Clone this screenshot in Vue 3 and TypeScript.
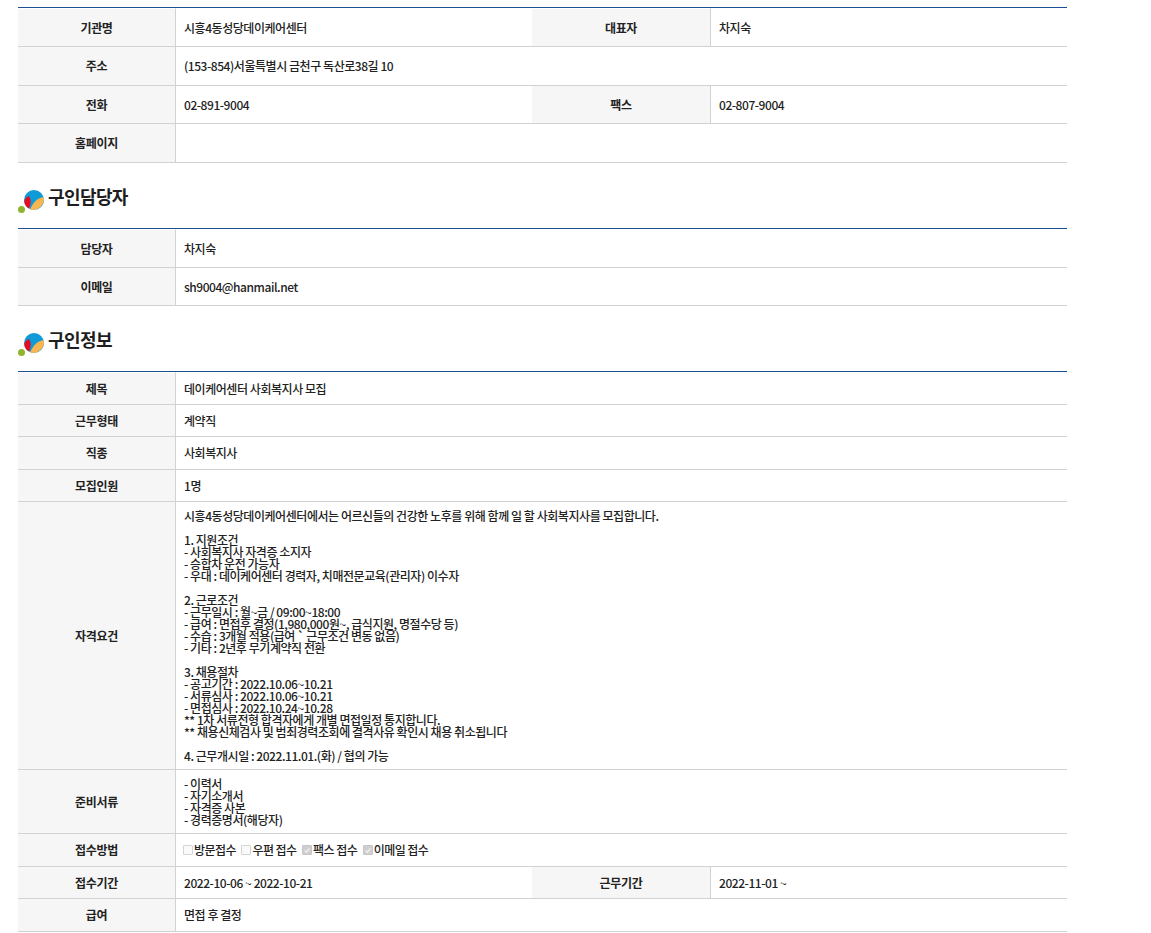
<script setup lang="ts">
interface Cell { th: string; td: string; th2?: string; td2?: string; h: number }
const t1: Cell[] = [
  { th: '기관명', td: '시흥4동성당데이케어센터', th2: '대표자', td2: '차지숙', h: 39 },
  { th: '주소', td: '(153-854)서울특별시 금천구 독산로38길 10', h: 39 },
  { th: '전화', td: '02-891-9004', th2: '팩스', td2: '02-807-9004', h: 38 },
  { th: '홈페이지', td: '', h: 39 },
]
const t2: Cell[] = [
  { th: '담당자', td: '차지숙', h: 39 },
  { th: '이메일', td: 'sh9004@hanmail.net', h: 38 },
]
const desc = `시흥4동성당데이케어센터에서는 어르신들의 건강한 노후를 위해 함께 일 할 사회복지사를 모집합니다.

1. 지원조건
- 사회복지사 자격증 소지자
- 승합차 운전 가능자
- 우대 : 데이케어센터 경력자, 치매전문교육(관리자) 이수자

2. 근로조건
- 근무일시 : 월~금 / 09:00~18:00
- 급여 : 면접후 결정(1,980,000원~, 급식지원, 명절수당 등)
- 수습 : 3개월 적용(급여 \` 근무조건 변동 없음)
- 기타 : 2년후 무기계약직 전환

3. 채용절차
- 공고기간 : 2022.10.06~10.21
- 서류심사 : 2022.10.06~10.21
- 면접심사 : 2022.10.24~10.28
** 1차 서류전형 합격자에게 개별 면접일정 통지합니다.
** 채용신체검사 및 범죄경력조회에 결격사유 확인시 채용 취소됩니다

4. 근무개시일 : 2022.11.01.(화) / 협의 가능`
const docs = `- 이력서
- 자기소개서
- 자격증 사본
- 경력증명서(해당자)`
const methods = [
  { label: '방문접수', on: false },
  { label: '우편 접수', on: false },
  { label: '팩스 접수', on: true },
  { label: '이메일 접수', on: true },
]
</script>

<template>
  <div class="page">
    <table class="tbl">
      <colgroup><col class="c1" /><col class="c2" /><col class="c3" /><col /></colgroup>
      <tbody>
        <tr v-for="r in t1" :key="r.th" :style="{ height: r.h + 'px' }">
          <th>{{ r.th }}</th>
          <td :colspan="r.th2 ? 1 : 3">{{ r.td }}</td>
          <template v-if="r.th2"><th>{{ r.th2 }}</th><td>{{ r.td2 }}</td></template>
        </tr>
      </tbody>
    </table>

    <h2 class="head">
      <svg class="logo" width="28" height="26" viewBox="0 0 28 26">
        <circle cx="3.5" cy="22.5" r="3.5" fill="#8db52e" />
        <circle cx="16" cy="13" r="10" fill="#0f9ad8" />
        <path d="M12 22.5C15 15.5 20 10.5 25.9 10C27 17.5 21 23 15 23C14 23 13 22.8 12 22.5Z" fill="#f9b64f" />
        <path d="M6.3 14C7 11.5 9 10 10.5 9C12.5 11 13 13.5 12.5 16.5C12 18.5 11.5 20 11 21.5C8 20 6.5 17.5 6.3 14Z" fill="#e60d20" />
      </svg>
      구인담당자
    </h2>

    <table class="tbl">
      <colgroup><col class="c1" /><col /></colgroup>
      <tbody>
        <tr v-for="r in t2" :key="r.th" :style="{ height: r.h + 'px' }">
          <th>{{ r.th }}</th>
          <td>{{ r.td }}</td>
        </tr>
      </tbody>
    </table>

    <h2 class="head">
      <svg class="logo" width="28" height="26" viewBox="0 0 28 26">
        <circle cx="3.5" cy="22.5" r="3.5" fill="#8db52e" />
        <circle cx="16" cy="13" r="10" fill="#0f9ad8" />
        <path d="M12 22.5C15 15.5 20 10.5 25.9 10C27 17.5 21 23 15 23C14 23 13 22.8 12 22.5Z" fill="#f9b64f" />
        <path d="M6.3 14C7 11.5 9 10 10.5 9C12.5 11 13 13.5 12.5 16.5C12 18.5 11.5 20 11 21.5C8 20 6.5 17.5 6.3 14Z" fill="#e60d20" />
      </svg>
      구인정보
    </h2>

    <table class="tbl">
      <colgroup><col class="c1" /><col class="c2" /><col class="c3" /><col /></colgroup>
      <tbody>
        <tr class="r33"><th>제목</th><td colspan="3">데이케어센터 사회복지사 모집</td></tr>
        <tr class="r32"><th>근무형태</th><td colspan="3">계약직</td></tr>
        <tr class="r33"><th>직종</th><td colspan="3">사회복지사</td></tr>
        <tr class="r32"><th>모집인원</th><td colspan="3">1명</td></tr>
        <tr class="r268"><th>자격요건</th><td colspan="3" class="pre">{{ desc }}</td></tr>
        <tr class="r64"><th>준비서류</th><td colspan="3" class="pre">{{ docs }}</td></tr>
        <tr class="r33">
          <th>접수방법</th>
          <td colspan="3">
            <span class="methods">
              <span v-for="m in methods" :key="m.label" class="method">
                <span class="box" :class="{ on: m.on }">
                  <svg v-if="m.on" width="9" height="9" viewBox="0 0 9 9"><path d="M2 4.5L4 6.5L7.2 2.2" fill="none" stroke="#f4f4f4" stroke-width="1.3" /></svg>
                </span>{{ m.label }}
              </span>
            </span>
          </td>
        </tr>
        <tr class="r32">
          <th>접수기간</th><td>2022-10-06 ~ 2022-10-21</td>
          <th>근무기간</th><td>2022-11-01 ~</td>
        </tr>
        <tr class="r33"><th>급여</th><td colspan="3">면접 후 결정</td></tr>
      </tbody>
    </table>
  </div>
</template>

<style>
html, body { margin: 0; background: #fff; }
</style>

<style scoped>
.page {
  width: 1049px;
  margin-left: 18px;
  padding-top: 7px;
  font-family: "Noto Sans CJK KR", "Noto Sans", sans-serif;
  color: #222;
}
.tbl {
  width: 100%;
  table-layout: fixed;
  border-collapse: separate;
  border-spacing: 0;
  border-top: 1px solid #1c4f94;
  font-size: 12px;
  letter-spacing: -0.35px;
}
.c1 { width: 158px; }
.c2 { width: 356px; }
.c3 { width: 179px; }
th, td {
  box-sizing: border-box;
  padding: 0 8px;
  border-bottom: 1px solid #d2d2d2;
  line-height: 12px;
}
tr:first-child > th, tr:first-child > td { border-top: 1px solid #fff; }
th {
  background: #f6f6f6;
  border-right: 1px solid #d2d2d2;
  font-weight: 700;
  text-align: center;
  color: #222;
}
td { font-weight: 500; color: #222; letter-spacing: -0.45px; }
.pre { white-space: pre-line; }
.r32 { height: 32px; }
.r33 { height: 33px; }
.r64 { height: 64px; }
.r268 { height: 268px; }
.head {
  display: flex;
  align-items: center;
  gap: 2px;
  margin: 0;
  padding: 20px 0 19px;
  font-size: 18px;
  font-weight: 700;
  letter-spacing: -0.6px;
  line-height: 26px;
  color: #1e1e1e;
}
.logo { flex: none; align-self: flex-start; margin: 4px 0 -4px; }
.methods { display: flex; gap: 5.5px; align-items: center; margin-left: -1px; letter-spacing: -0.55px; }
.method { display: inline-flex; align-items: center; }
.box {
  box-sizing: border-box;
  width: 10px;
  height: 10px;
  margin-right: 1px;
  border: 1px solid #d4d4d4;
  border-radius: 1px;
  background: #fafafa;
  display: inline-flex;
  align-items: center;
  justify-content: center;
}
.box.on { background: #cfcfcf; border-color: #c6c6c6; }
</style>
